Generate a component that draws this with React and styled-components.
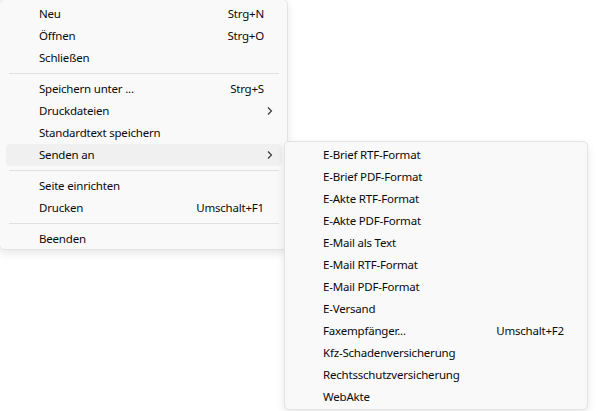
import React from "react";
import styled, { createGlobalStyle } from "styled-components";

const GlobalStyle = createGlobalStyle`
  html, body {
    margin: 0;
    padding: 0;
    background: #ffffff;
  }
  body {
    font-family: "Noto Sans", "Open Sans", sans-serif;
    font-size: 11.5px;
    letter-spacing: -0.2px;
    color: #0a0a0a;
  }
`;

const mainItems = [
  { label: "Neu", shortcut: "Strg+N" },
  { label: "Öffnen", shortcut: "Strg+O" },
  { label: "Schließen" },
  "sep",
  { label: "Speichern unter ...", shortcut: "Strg+S" },
  { label: "Druckdateien", sub: true },
  { label: "Standardtext speichern" },
  { label: "Senden an", sub: true, active: true },
  "sep",
  { label: "Seite einrichten" },
  { label: "Drucken", shortcut: "Umschalt+F1" },
  "sep",
  { label: "Beenden" },
];

const sendItems = [
  { label: "E-Brief RTF-Format" },
  { label: "E-Brief PDF-Format" },
  { label: "E-Akte RTF-Format" },
  { label: "E-Akte PDF-Format" },
  { label: "E-Mail als Text" },
  { label: "E-Mail RTF-Format" },
  { label: "E-Mail PDF-Format" },
  { label: "E-Versand" },
  { label: "Faxempfänger...", shortcut: "Umschalt+F2" },
  { label: "Kfz-Schadenversicherung" },
  { label: "Rechtsschutzversicherung" },
  { label: "WebAkte" },
];

const Chevron = () => (
  <svg width="8" height="10" viewBox="0 0 8 10">
    <path d="M2 1.5 L5.5 5 L2 8.5" fill="none" stroke="#333" strokeWidth="1.1" />
  </svg>
);

const MenuList = ({ items }) =>
  items.map((it, i) =>
    it === "sep" ? (
      <Separator key={i} />
    ) : (
      <Item key={i} $active={it.active}>
        <Label>{it.label}</Label>
        <Shortcut>{it.shortcut}</Shortcut>
        <Arrow>{it.sub && <Chevron />}</Arrow>
      </Item>
    )
  );

const App = () => {
  return (
    <>
      <GlobalStyle />
      <Stage>
        <MainMenu>
          <MenuList items={mainItems} />
        </MainMenu>
        <SubMenu>
          <MenuList items={sendItems} />
        </SubMenu>
      </Stage>
    </>
  );
};

export default App;

const Stage = styled.div`
  position: relative;
  width: 597px;
  height: 411px;
  overflow: hidden;
`;

const Panel = styled.div`
  background: #f9f9f9;
  border: 1px solid #e3e3e3;
  border-radius: 5px;
  box-shadow: 0 4px 10px rgba(0, 0, 0, 0.09);
  box-sizing: border-box;
  display: flex;
  flex-direction: column;
`;

const MainMenu = styled(Panel)`
  width: 289px;
  height: 251px;
  margin-top: -1px;
  margin-left: -1px;
  padding: 3px 5px 0 6px;
`;

const SubMenu = styled(Panel)`
  position: absolute;
  left: 284px;
  top: 141px;
  width: 304px;
  height: 269px;
  padding: 2px 5px 1px 5px;
`;

const Item = styled.div`
  display: grid;
  grid-template-columns: 1fr auto 18px;
  align-items: center;
  height: 22px;
  flex: none;
  padding-left: 33px;
  border-radius: 4px;
  background: ${(p) => (p.$active ? "#f0f0f0" : "transparent")};
`;

const Label = styled.span`
  white-space: nowrap;
  line-height: 22px;
`;

const Shortcut = styled.span`
  white-space: nowrap;
  line-height: 22px;
`;

const Arrow = styled.span`
  display: flex;
  justify-content: flex-end;
  align-items: center;
  padding-right: 8px;
`;

const Separator = styled.div`
  flex: none;
  height: 9px;
  display: flex;
  align-items: center;
  margin: 0 3px;
  &::after {
    content: "";
    flex: 1;
    height: 1px;
    background: #e0e0e0;
  }
`;
